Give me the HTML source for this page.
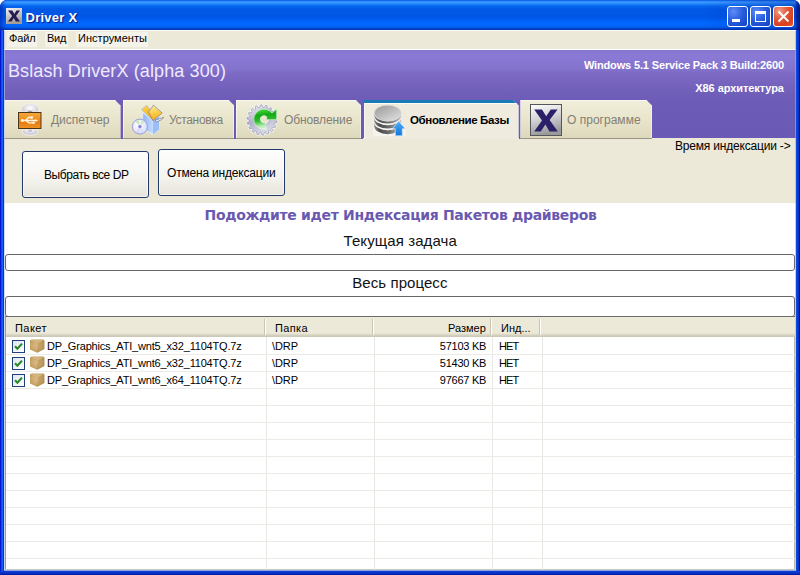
<!DOCTYPE html>
<html><head><meta charset="utf-8">
<style>
html,body{margin:0;padding:0;}
body{width:800px;height:575px;overflow:hidden;background:#fff;position:relative;font-family:"Liberation Sans",sans-serif;font-size:11px;color:#000;}
.abs{position:absolute;}
#win{position:absolute;left:0;top:0;width:800px;height:575px;border-radius:7px 7px 0 0;overflow:hidden;background:#0a3bd2;}
#title{position:absolute;left:0;top:0;width:800px;height:30px;background:linear-gradient(to bottom,#0050da 0px,#2a8bff 1.2px,#3b97ff 2.5px,#2085fb 4px,#0667ee 6px,#0059e5 9px,#0057e5 17px,#005ff4 20px,#0267fe 23px,#0365fa 26px,#0359e8 27.5px,#0046c8 28.6px,#002f9e 30px);}
#bl{position:absolute;left:0;top:30px;width:4px;height:545px;background:linear-gradient(to right,#0019cf 0,#0019cf 1px,#0f4bee 1px,#0f4bee 2px,#1a5cf4 2px,#1a5cf4 3px,#0634c4 3px,#0634c4 4px);}
#br{position:absolute;left:796px;top:30px;width:4px;height:545px;background:linear-gradient(to right,#1148de 0,#1148de 1px,#0a3cd8 1px,#0a3cd8 2px,#0632cc 2px,#0632cc 3px,#001a98 3px,#001a98 4px);}
#bb{position:absolute;left:0;top:571px;width:800px;height:4px;background:linear-gradient(to bottom,#0c3ad2 0,#0c3ad2 1px,#0a34cc 1px,#0a34cc 2px,#082cc0 2px,#082cc0 3px,#001fa6 3px,#001fa6 4px);}
#ttext{position:absolute;left:26px;top:9.5px;font-family:"Liberation Sans",sans-serif;font-weight:bold;font-size:13px;color:#fff;text-shadow:1px 1px 1px #0a1883;white-space:nowrap;}
.tb{position:absolute;top:6px;width:21px;height:21px;border-radius:3px;border:1px solid #fff;box-sizing:border-box;background:radial-gradient(circle at 30% 25%,#5e8cf5 0%,#2a5fe0 45%,#1240c0 100%);}
#menu{position:absolute;left:4px;top:30px;width:792px;height:19px;background:#ece9d8;}
#menuline{position:absolute;left:4px;top:49px;width:792px;height:1px;background:#fff;}
.mi{position:absolute;top:2px;height:15px;background:#f4f3ea;}
.mt{position:absolute;top:32.3px;font-size:11px;white-space:nowrap;}
#hdr{position:absolute;left:4px;top:50px;width:792px;height:88px;background:linear-gradient(to bottom,#8675d0 0%,#8a79d6 7%,#8473cc 22%,#7c6ac5 26%,#7361bb 42%,#6d5cb7 58%,#6b5ab5 100%);}
#panel{position:absolute;left:4px;top:138px;width:792px;height:65px;background:#ece9d8;}
#white{position:absolute;left:4px;top:203px;width:792px;height:367px;background:#fff;}
.tab{position:absolute;top:99.5px;height:39.2px;box-shadow:inset 1px 1px 0 rgba(255,255,255,.6),inset -1px 0 0 rgba(255,255,255,.45);background:linear-gradient(to bottom,#f1eedb 0%,#e9e5cc 50%,#ddd8bb 100%);}
.tabt{position:absolute;font-size:12px;color:#827f75;white-space:nowrap;top:113px;}
.btn{position:absolute;box-sizing:border-box;width:127px;height:47px;border:1px solid #21386b;border-radius:3px;background:linear-gradient(to bottom,#fefefd 0%,#f4f3ee 60%,#e6e4da 100%);box-shadow:inset 0 0 0 1px rgba(255,255,255,.6);}
.bt{position:absolute;font-size:12px;white-space:nowrap;}
.pb{position:absolute;left:5px;width:790px;box-sizing:border-box;border:1px solid #686868;border-radius:3px;background:#fff;}
.lt{position:absolute;font-size:11px;white-space:nowrap;line-height:14px;}
.ctr{position:absolute;left:4px;width:792px;text-align:center;white-space:nowrap;}
</style><style id="fit">
#ttext{letter-spacing:0.266px;left:25.5px;right:auto;text-align:left;width:auto}
#m1{letter-spacing:-0.099px;left:9.2px;right:auto;text-align:left;width:auto}
#m2{letter-spacing:-0.269px;left:47.0px;right:auto;text-align:left;width:auto}
#m3{letter-spacing:0.037px;left:77.5px;right:auto;text-align:left;width:auto}
#apptitle{letter-spacing:0.111px;left:7.5px;right:auto;text-align:left;width:auto}
#os1{letter-spacing:-0.144px;left:583.9px;right:auto;text-align:left;width:auto}
#os2{letter-spacing:-0.072px;left:695.3px;right:auto;text-align:left;width:auto}
#tt1{letter-spacing:-0.023px;left:50.5px;right:auto;text-align:left;width:auto}
#tt2{letter-spacing:-0.313px;left:168.8px;right:auto;text-align:left;width:auto}
#tt3{letter-spacing:-0.100px;left:283.2px;right:auto;text-align:left;width:auto}
#tt4{letter-spacing:-0.369px;left:409.2px;right:auto;text-align:left;width:auto}
#tt5{letter-spacing:0.016px;left:566.9px;right:auto;text-align:left;width:auto}
#b1{letter-spacing:-0.435px;left:43.8px;right:auto;text-align:left;width:auto}
#b2{letter-spacing:-0.190px;left:166.8px;right:auto;text-align:left;width:auto}
#tm{letter-spacing:-0.191px;left:674.8px;right:auto;text-align:left;width:auto}
#h1{letter-spacing:-0.324px;left:204.5px;right:auto;text-align:left;width:auto}
#h2{letter-spacing:0.099px;left:343.5px;right:auto;text-align:left;width:auto}
#h3{letter-spacing:0.066px;left:352.3px;right:auto;text-align:left;width:auto}
#lh1{letter-spacing:0.427px;left:9.9px;right:auto;text-align:left;width:auto}
#lh2{letter-spacing:0.349px;left:269.8px;right:auto;text-align:left;width:auto}
#lh3{letter-spacing:-0.002px;left:443.0px;right:auto;text-align:left;width:auto}
#lh4{letter-spacing:0.020px;left:496.1px;right:auto;text-align:left;width:auto}
#r0n{letter-spacing:-0.181px;left:42.0px;right:auto;text-align:left;width:auto}
#r0f{letter-spacing:-0.095px;left:266.5px;right:auto;text-align:left;width:auto}
#r0s{letter-spacing:-0.254px;left:434.8px;right:auto;text-align:left;width:auto}
#r0i{letter-spacing:-0.933px;left:493.3px;right:auto;text-align:left;width:auto}
#r1n{letter-spacing:-0.181px;left:42.0px;right:auto;text-align:left;width:auto}
#r1f{letter-spacing:-0.095px;left:266.5px;right:auto;text-align:left;width:auto}
#r1s{letter-spacing:-0.254px;left:434.8px;right:auto;text-align:left;width:auto}
#r1i{letter-spacing:-0.933px;left:493.3px;right:auto;text-align:left;width:auto}
#r2n{letter-spacing:-0.181px;left:42.0px;right:auto;text-align:left;width:auto}
#r2f{letter-spacing:-0.095px;left:266.5px;right:auto;text-align:left;width:auto}
#r2s{letter-spacing:-0.254px;left:434.8px;right:auto;text-align:left;width:auto}
#r2i{letter-spacing:-0.933px;left:493.3px;right:auto;text-align:left;width:auto}
</style></head><body>
<div id="win">
<div id="title"></div>
<div class="abs" style="left:0;top:0;width:800px;height:30px;background:linear-gradient(to right,rgba(0,20,160,.55) 0,rgba(0,20,160,.25) 3px,rgba(0,20,160,0) 7px,rgba(0,20,160,0) 700px,rgba(0,25,150,.22) 770px,rgba(0,25,150,.3) 795px,rgba(0,10,120,.7) 797px,rgba(0,10,110,.8) 800px)"></div>
<div id="bl"></div><div id="br"></div>
<div id="menu">
 <div class="mi" style="left:3px;width:30px"></div>
 <div class="mi" style="left:41px;width:23px"></div>
 <div class="mi" style="left:72px;width:72px"></div>
</div>
<div id="menuline"></div>
<div class="mt" id="m1" style="left:9px">Файл</div>
<div class="mt" id="m2" style="left:47px">Вид</div>
<div class="mt" id="m3" style="left:78px">Инструменты</div>
<div id="hdr"></div>
<div id="apptitle" class="abs" style="left:8px;top:61.4px;font-size:18px;color:#eeeaff;white-space:nowrap;">Bslash DriverX (alpha 300)</div>
<div id="os1" class="abs" style="right:17px;top:58.5px;font-size:11px;font-weight:bold;color:#fff;white-space:nowrap;">Windows 5.1 Service Pack 3 Build:2600</div>
<div id="os2" class="abs" style="right:16px;top:82px;font-size:11px;font-weight:bold;color:#fff;white-space:nowrap;">X86 архитектура</div>
<div id="panel"></div>
<!-- tabs -->
<div class="tab" id="tab1" style="left:4px;width:116.5px;clip-path:polygon(0 0,110.5px 0,100% 6px,100% 100%,0 100%)"></div>
<div class="tab" id="tab2" style="left:122.5px;width:111.7px;clip-path:polygon(0 0,105.7px 0,100% 6px,100% 100%,0 100%)"></div>
<div class="tab" id="tab3" style="left:236px;width:125.3px;clip-path:polygon(0 0,119.3px 0,100% 6px,100% 100%,0 100%)"></div>
<div class="tab" id="tab4" style="left:363.5px;width:155.1px;height:39.5px;background:#efecdf;clip-path:polygon(0 0,149.5px 0,100% 6px,100% 100%,0 100%)"><div style="position:absolute;left:0;top:0;width:100%;height:3.5px;background:#1a7cb6"></div><div style="position:absolute;left:0;top:3.5px;width:100%;height:1px;background:#fbfaf5"></div></div>
<div class="tab" id="tab5" style="left:520.4px;width:131.6px;clip-path:polygon(0 0,125.5px 0,100% 6px,100% 100%,0 100%)"></div>
<div class="abs" style="left:4px;top:137.700px;width:357.500px;height:1px;background:#9a978a"></div>
<div class="abs" style="left:520.400px;top:137.700px;width:131.600px;height:1px;background:#9a978a"></div>
<div class="tabt" id="tt1" style="left:51px">Диспетчер</div>
<div class="tabt" id="tt2" style="left:169px">Установка</div>
<div class="tabt" id="tt3" style="left:284px">Обновление</div>
<div class="tabt" id="tt4" style="left:410px;color:#000;font-weight:bold;font-size:11.5px;top:114px">Обновление Базы</div>
<div class="tabt" id="tt5" style="left:567px">О программе</div>
<div class="abs" style="left:120.500px;top:138px;width:2px;height:0.700px;background:#6b5ab5"></div><div class="abs" style="left:234.200px;top:138px;width:1.800px;height:0.700px;background:#6b5ab5"></div><div class="abs" style="left:361.300px;top:138px;width:2.200px;height:0.700px;background:#6b5ab5"></div><div class="abs" style="left:518.600px;top:138px;width:1.800px;height:0.700px;background:#6b5ab5"></div>
<!-- buttons -->
<div class="btn" style="left:22px;top:151px"></div>
<div class="btn" style="left:158px;top:149px"></div>
<div class="bt" id="b1" style="left:44px;top:168px">Выбрать все DP</div>
<div class="bt" id="b2" style="left:167px;top:166px">Отмена индексации</div>
<div class="bt" id="tm" style="left:675px;top:138.7px">Время индексации -&gt;</div>
<div id="white"></div>
<div class="ctr" id="h1" style="top:207.2px;font-family:'DejaVu Sans','Liberation Sans',sans-serif;font-size:14px;font-weight:bold;color:#6a59b0">Подождите идет Индексация Пакетов драйверов</div>
<div class="ctr" id="h2" style="top:231.5px;font-size:15px;color:#111">Текущая задача</div>
<div class="pb" style="top:254px;height:17px"></div>
<div class="ctr" id="h3" style="top:273.6px;font-size:15px;color:#111">Весь процесс</div>
<div class="pb" style="top:296px;height:21px"></div>
<!-- list -->
<div id="list" class="abs" style="left:5px;top:316px;width:790px;height:254px;background:#fff;overflow:hidden">
<div class="abs" style="left:0;top:0;width:790px;height:1px;background:#6b6b68"></div>
<div class="abs" style="left:0;top:1px;width:1px;height:253px;background:#9c9c96"></div><div class="abs" style="left:789px;top:1px;width:1px;height:253px;background:#b9b9ae"></div><div class="abs" style="left:0;top:253px;width:790px;height:1px;background:#c9c9c1"></div>
<div id="lh" class="abs" style="left:1px;top:1px;width:789px;height:20px;background:linear-gradient(to bottom,#eeebdd 0px,#ece9d8 3px,#ece9d8 16px,#e3dfcd 17px,#d9d5c3 18px,#cdc9b9 19px,#cdc9b9 20px)"></div>
<div class="abs" style="left:259px;top:3px;width:1px;height:16px;background:#c8c5b4"></div><div class="abs" style="left:260px;top:3px;width:1px;height:16px;background:#fff"></div>
<div class="abs" style="left:367px;top:3px;width:1px;height:16px;background:#c8c5b4"></div><div class="abs" style="left:368px;top:3px;width:1px;height:16px;background:#fff"></div>
<div class="abs" style="left:485px;top:3px;width:1px;height:16px;background:#c8c5b4"></div><div class="abs" style="left:486px;top:3px;width:1px;height:16px;background:#fff"></div>
<div class="abs" style="left:534px;top:3px;width:1px;height:16px;background:#c8c5b4"></div><div class="abs" style="left:535px;top:3px;width:1px;height:16px;background:#fff"></div>
<div class="abs" style="left:261px;top:21px;width:1px;height:233px;background:#e8e7e1"></div>
<div class="abs" style="left:369px;top:21px;width:1px;height:233px;background:#e8e7e1"></div>
<div class="abs" style="left:487px;top:21px;width:1px;height:233px;background:#e8e7e1"></div>
<div class="abs" style="left:537px;top:21px;width:1px;height:233px;background:#e8e7e1"></div>
<div class="abs" style="left:1px;top:38px;width:789px;height:1px;background:#ecebe6"></div>
<div class="abs" style="left:1px;top:55px;width:789px;height:1px;background:#ecebe6"></div>
<div class="abs" style="left:1px;top:72px;width:789px;height:1px;background:#ecebe6"></div>
<div class="abs" style="left:1px;top:89px;width:789px;height:1px;background:#ecebe6"></div>
<div class="abs" style="left:1px;top:106px;width:789px;height:1px;background:#ecebe6"></div>
<div class="abs" style="left:1px;top:123px;width:789px;height:1px;background:#ecebe6"></div>
<div class="abs" style="left:1px;top:140px;width:789px;height:1px;background:#ecebe6"></div>
<div class="abs" style="left:1px;top:157px;width:789px;height:1px;background:#ecebe6"></div>
<div class="abs" style="left:1px;top:174px;width:789px;height:1px;background:#ecebe6"></div>
<div class="abs" style="left:1px;top:191px;width:789px;height:1px;background:#ecebe6"></div>
<div class="abs" style="left:1px;top:208px;width:789px;height:1px;background:#ecebe6"></div>
<div class="abs" style="left:1px;top:225px;width:789px;height:1px;background:#ecebe6"></div>
<div class="abs" style="left:1px;top:242px;width:789px;height:1px;background:#ecebe6"></div>
<div class="lt" id="lh1" style="left:10px;top:5px">Пакет</div>
<div class="lt" id="lh2" style="left:270px;top:5px">Папка</div>
<div class="lt" id="lh3" style="right:310px;top:5px">Размер</div>
<div class="lt" id="lh4" style="left:496px;top:5px">Инд...</div>
<svg class="abs" style="left:7px;top:24px" width="13" height="13" viewBox="0 0 13 13"><defs><linearGradient id="cg0" x1="0" y1="0" x2="1" y2="1"><stop offset="0" stop-color="#dfe6ee"/><stop offset="1" stop-color="#ffffff"/></linearGradient></defs><rect x="0.5" y="0.5" width="12" height="12" fill="url(#cg0)" stroke="#213f7c"/><path d="M3 6.2 L5.4 8.8 L10 3.6" fill="none" stroke="#258a25" stroke-width="2.1"/></svg>
<svg class="abs" style="left:24px;top:23px" width="16" height="15" viewBox="0 0 16 15"><defs><radialGradient id="bx23" cx="0.45" cy="0.45" r="0.65"><stop offset="0" stop-color="#dbba84"/><stop offset="0.6" stop-color="#c9a66a"/><stop offset="1" stop-color="#a98a4c"/></radialGradient></defs><path d="M1 1.600 L2.600 0.400 L14.400 0.400 L15.400 1.400 L15.400 10 L8.200 13.700 L1 10.500Z" fill="url(#bx23)"/><path d="M9 4 L15.400 1.400 L15.400 10 L8.200 13.700Z" fill="#a88848" opacity="0.350"/><path d="M1 1.600 L2.600 0.400 L14.400 0.400 L15.400 1.400 L9 4Z" fill="#e2c898" opacity="0.400"/></svg>
<div class="lt" id="r0n" style="left:42px;top:23px">DP_Graphics_ATI_wnt5_x32_1104TQ.7z</div>
<div class="lt" id="r0f" style="left:267px;top:23px">\DRP</div>
<div class="lt" id="r0s" style="right:309px;top:23px">57103 KB</div>
<div class="lt" id="r0i" style="left:494px;top:23px">НЕТ</div>
<svg class="abs" style="left:7px;top:41px" width="13" height="13" viewBox="0 0 13 13"><defs><linearGradient id="cg1" x1="0" y1="0" x2="1" y2="1"><stop offset="0" stop-color="#dfe6ee"/><stop offset="1" stop-color="#ffffff"/></linearGradient></defs><rect x="0.5" y="0.5" width="12" height="12" fill="url(#cg1)" stroke="#213f7c"/><path d="M3 6.2 L5.4 8.8 L10 3.6" fill="none" stroke="#258a25" stroke-width="2.1"/></svg>
<svg class="abs" style="left:24px;top:40px" width="16" height="15" viewBox="0 0 16 15"><defs><radialGradient id="bx40" cx="0.45" cy="0.45" r="0.65"><stop offset="0" stop-color="#dbba84"/><stop offset="0.6" stop-color="#c9a66a"/><stop offset="1" stop-color="#a98a4c"/></radialGradient></defs><path d="M1 1.600 L2.600 0.400 L14.400 0.400 L15.400 1.400 L15.400 10 L8.200 13.700 L1 10.500Z" fill="url(#bx40)"/><path d="M9 4 L15.400 1.400 L15.400 10 L8.200 13.700Z" fill="#a88848" opacity="0.350"/><path d="M1 1.600 L2.600 0.400 L14.400 0.400 L15.400 1.400 L9 4Z" fill="#e2c898" opacity="0.400"/></svg>
<div class="lt" id="r1n" style="left:42px;top:40px">DP_Graphics_ATI_wnt6_x32_1104TQ.7z</div>
<div class="lt" id="r1f" style="left:267px;top:40px">\DRP</div>
<div class="lt" id="r1s" style="right:309px;top:40px">51430 KB</div>
<div class="lt" id="r1i" style="left:494px;top:40px">НЕТ</div>
<svg class="abs" style="left:7px;top:58px" width="13" height="13" viewBox="0 0 13 13"><defs><linearGradient id="cg2" x1="0" y1="0" x2="1" y2="1"><stop offset="0" stop-color="#dfe6ee"/><stop offset="1" stop-color="#ffffff"/></linearGradient></defs><rect x="0.5" y="0.5" width="12" height="12" fill="url(#cg2)" stroke="#213f7c"/><path d="M3 6.2 L5.4 8.8 L10 3.6" fill="none" stroke="#258a25" stroke-width="2.1"/></svg>
<svg class="abs" style="left:24px;top:57px" width="16" height="15" viewBox="0 0 16 15"><defs><radialGradient id="bx57" cx="0.45" cy="0.45" r="0.65"><stop offset="0" stop-color="#dbba84"/><stop offset="0.6" stop-color="#c9a66a"/><stop offset="1" stop-color="#a98a4c"/></radialGradient></defs><path d="M1 1.600 L2.600 0.400 L14.400 0.400 L15.400 1.400 L15.400 10 L8.200 13.700 L1 10.500Z" fill="url(#bx57)"/><path d="M9 4 L15.400 1.400 L15.400 10 L8.200 13.700Z" fill="#a88848" opacity="0.350"/><path d="M1 1.600 L2.600 0.400 L14.400 0.400 L15.400 1.400 L9 4Z" fill="#e2c898" opacity="0.400"/></svg>
<div class="lt" id="r2n" style="left:42px;top:57px">DP_Graphics_ATI_wnt6_x64_1104TQ.7z</div>
<div class="lt" id="r2f" style="left:267px;top:57px">\DRP</div>
<div class="lt" id="r2s" style="right:309px;top:57px">97667 KB</div>
<div class="lt" id="r2i" style="left:494px;top:57px">НЕТ</div>
</div>
<!--ICONS--><!-- title icon -->
<svg class="abs" style="left:6px;top:8px" width="16" height="16" viewBox="0 0 16 16"><defs><linearGradient id="ti" x1="0" y1="0" x2="0.3" y2="1"><stop offset="0" stop-color="#f4f2f6"/><stop offset="1" stop-color="#a59c98"/></linearGradient></defs><rect width="16" height="16" fill="url(#ti)"/><path d="M2 2.5H6.3L8.3 6L10.5 2.5H14L10 8L14 13.5H9.8L7.8 10L5.6 13.5H2L6.2 8Z" fill="#241a52"/></svg>
<!-- tab1 icon: usb device -->
<svg class="abs" style="left:14px;top:101px" width="32" height="36" viewBox="14 101 32 36"><defs>
<linearGradient id="i1a" x1="0" y1="0" x2="0" y2="1"><stop offset="0" stop-color="#f6a93c"/><stop offset="0.5" stop-color="#ee8a1e"/><stop offset="0.55" stop-color="#e67a0c"/><stop offset="1" stop-color="#f09424"/></linearGradient>
<radialGradient id="i1b" cx="0.5" cy="0.35" r="0.7"><stop offset="0" stop-color="#ffffff"/><stop offset="1" stop-color="#b9b6c4"/></radialGradient></defs>
<ellipse cx="30" cy="110" rx="9" ry="6.5" fill="url(#i1b)" stroke="#f4f2ee" stroke-width="1"/>
<ellipse cx="30" cy="112" rx="2.6" ry="1.3" fill="#55525e"/>
<ellipse cx="30" cy="131.5" rx="8" ry="3.8" fill="url(#i1b)" stroke="#f4f2ee" stroke-width="1"/>
<rect x="28" y="127" width="4" height="5" fill="#c8c6d0"/>
<rect x="17.5" y="111.5" width="24.500" height="18" fill="#f3efe6"/>
<rect x="18.500" y="112.500" width="22.500" height="16" fill="url(#i1a)" stroke="#4a3418" stroke-width="1"/>
<path d="M22 120.500 H25.500 L28.500 117.500 H31 M25.500 120.500 L29 122.800 H33 M25.500 120.500 H36" fill="none" stroke="#fff6e0" stroke-width="1.300"/>
<circle cx="22.300" cy="120.500" r="1.500" fill="#fff6e0"/><rect x="30.500" y="116.300" width="2.400" height="2.400" fill="#fff6e0"/><circle cx="33.600" cy="122.800" r="1.300" fill="#fff6e0"/><path d="M35.500 119 L38 120.500 L35.500 122Z" fill="#fff6e0"/>
</svg>
<!-- tab2 icon: box + cd -->
<svg class="abs" style="left:128px;top:101px" width="38" height="36" viewBox="128 101 38 36"><defs>
<linearGradient id="i2a" x1="0" y1="0" x2="1" y2="0"><stop offset="0" stop-color="#8db5f4"/><stop offset="0.6" stop-color="#c3dbfd"/><stop offset="1" stop-color="#a9c9f8"/></linearGradient>
<linearGradient id="i2b" x1="0.2" y1="0" x2="0.6" y2="1"><stop offset="0" stop-color="#fbd04a"/><stop offset="0.5" stop-color="#f8c030"/><stop offset="1" stop-color="#f0a21a"/></linearGradient>
<linearGradient id="i2d" x1="0.3" y1="0" x2="0.5" y2="1"><stop offset="0" stop-color="#fdeaa4"/><stop offset="0.6" stop-color="#f9c63c"/><stop offset="1" stop-color="#f2a61c"/></linearGradient>
<radialGradient id="i2c" cx="0.4" cy="0.4" r="0.7"><stop offset="0" stop-color="#ffffff"/><stop offset="1" stop-color="#d4d9fb"/></radialGradient></defs>
<path d="M142.700 112.500 L142.700 128.500 L153 134.400 L159.100 129.500 L159.100 116.500 L153 120.500Z" fill="url(#i2a)" stroke="#e4eefc" stroke-width="0.900"/>
<path d="M153 120.500 L159.100 116.500 L159.100 129.500 L153 134.400Z" fill="#9bbef4"/>
<path d="M141.400 109.500 L146.800 105.200 L152 112.500 L153 120.500Z" fill="url(#i2b)" stroke="#aebfe6" stroke-width="0.700"/>
<path d="M153.500 105.200 L162.200 113 L153 120.700 L148.500 112 Z" fill="url(#i2d)" stroke="#6a7390" stroke-width="0.600"/>
<path d="M155 120.300 L163.600 117.400 L161.800 119.600 L156.600 121.800Z" fill="#fafafc" stroke="#3a3a44" stroke-width="0.450"/>
<circle cx="139.900" cy="126.600" r="7.500" fill="url(#i2c)" stroke="#8b95d6" stroke-width="0.900"/>
<path d="M139.900 126.600 L135.600 121.600 A6.600 6.600 0 0 1 138.700 120.200Z" fill="#bfe3b2" opacity="0.850"/><path d="M139.900 126.600 L144.400 122.100 A6.600 6.600 0 0 0 141.700 120.300Z" fill="#c4e6ba" opacity="0.850"/><path d="M139.900 126.600 L136.200 131.900 A6.600 6.600 0 0 0 139.200 133.100Z" fill="#dbcdf5" opacity="0.850"/><path d="M139.900 126.600 L144 131.500 A6.600 6.600 0 0 1 141.200 132.900Z" fill="#d3daf8" opacity="0.850"/>
<circle cx="139.900" cy="126.600" r="1.700" fill="#8b7ce2"/>
</svg>
<!-- tab3 icon: gear + green arrow -->
<svg class="abs" style="left:244px;top:102px" width="36" height="36" viewBox="244 102 36 36"><defs>
<linearGradient id="i3a" x1="0" y1="0" x2="0.4" y2="1"><stop offset="0" stop-color="#f6f6fa"/><stop offset="0.55" stop-color="#b2b2c8"/><stop offset="1" stop-color="#dcdce8"/></linearGradient>
<linearGradient id="i3b" x1="0.4" y1="0" x2="0.55" y2="1"><stop offset="0" stop-color="#4ae040"/><stop offset="0.3" stop-color="#16a816"/><stop offset="0.55" stop-color="#2cbc2c"/><stop offset="0.8" stop-color="#b4eab0"/><stop offset="1" stop-color="#eef8ee"/></linearGradient></defs>
<path d="M274.70 120.00 L277.16 121.06 L276.97 122.64 L274.32 123.07 L273.93 124.34 L275.89 126.18 L275.16 127.60 L272.53 127.10 L271.73 128.16 L272.93 130.56 L271.77 131.64 L269.46 130.27 L268.35 131.00 L268.66 133.66 L267.20 134.28 L265.50 132.21 L264.21 132.51 L263.59 135.12 L262.00 135.20 L261.11 132.67 L259.79 132.51 L258.32 134.75 L256.80 134.28 L256.83 131.60 L255.65 131.00 L253.50 132.60 L252.23 131.64 L253.18 129.14 L252.27 128.16 L249.70 128.93 L248.84 127.60 L250.59 125.57 L250.07 124.34 L247.39 124.19 L247.03 122.64 L249.37 121.33 L249.30 120.00 L246.84 118.94 L247.03 117.36 L249.68 116.93 L250.07 115.66 L248.11 113.82 L248.84 112.40 L251.47 112.90 L252.27 111.84 L251.07 109.44 L252.23 108.36 L254.54 109.73 L255.65 109.00 L255.34 106.34 L256.80 105.72 L258.50 107.79 L259.79 107.49 L260.41 104.88 L262.00 104.80 L262.89 107.33 L264.21 107.49 L265.68 105.25 L267.20 105.72 L267.17 108.40 L268.35 109.00 L270.50 107.40 L271.77 108.36 L270.82 110.86 L271.73 111.84 L274.30 111.07 L275.16 112.40 L273.41 114.43 L273.93 115.66 L276.61 115.81 L276.97 117.36 L274.63 118.67Z M269.40 119.30 A5.4 5.4 0 1 0 258.60 119.30 A5.4 5.4 0 1 0 269.40 119.30Z" fill="url(#i3a)" fill-rule="evenodd" stroke="#f7f6f2" stroke-width="2.2" stroke-linejoin="round"/>
<path d="M274.70 120.00 L277.16 121.06 L276.97 122.64 L274.32 123.07 L273.93 124.34 L275.89 126.18 L275.16 127.60 L272.53 127.10 L271.73 128.16 L272.93 130.56 L271.77 131.64 L269.46 130.27 L268.35 131.00 L268.66 133.66 L267.20 134.28 L265.50 132.21 L264.21 132.51 L263.59 135.12 L262.00 135.20 L261.11 132.67 L259.79 132.51 L258.32 134.75 L256.80 134.28 L256.83 131.60 L255.65 131.00 L253.50 132.60 L252.23 131.64 L253.18 129.14 L252.27 128.16 L249.70 128.93 L248.84 127.60 L250.59 125.57 L250.07 124.34 L247.39 124.19 L247.03 122.64 L249.37 121.33 L249.30 120.00 L246.84 118.94 L247.03 117.36 L249.68 116.93 L250.07 115.66 L248.11 113.82 L248.84 112.40 L251.47 112.90 L252.27 111.84 L251.07 109.44 L252.23 108.36 L254.54 109.73 L255.65 109.00 L255.34 106.34 L256.80 105.72 L258.50 107.79 L259.79 107.49 L260.41 104.88 L262.00 104.80 L262.89 107.33 L264.21 107.49 L265.68 105.25 L267.20 105.72 L267.17 108.40 L268.35 109.00 L270.50 107.40 L271.77 108.36 L270.82 110.86 L271.73 111.84 L274.30 111.07 L275.16 112.40 L273.41 114.43 L273.93 115.66 L276.61 115.81 L276.97 117.36 L274.63 118.67Z M269.40 119.30 A5.4 5.4 0 1 0 258.60 119.30 A5.4 5.4 0 1 0 269.40 119.30Z" fill="url(#i3a)" fill-rule="evenodd" stroke="#9a9ab8" stroke-width="0.7"/>
<path d="M272.04 113.02 A10.2 10.2 0 1 0 266.64 129.15 L264.96 122.87 A3.7 3.7 0 1 1 266.92 117.02 L266.3 119.7 L276.7 119.7 L276.7 108.7Z" fill="url(#i3b)" stroke="#e2f6e0" stroke-width="0.6"/>
</svg>
<!-- tab4 icon: db + blue arrow -->
<svg class="abs" style="left:370px;top:103px" width="38" height="35" viewBox="370 103 38 35"><defs>
<linearGradient id="i4a" x1="0.1" y1="0" x2="0.9" y2="1"><stop offset="0" stop-color="#9c9c9c"/><stop offset="0.5" stop-color="#bdbdbd"/><stop offset="1" stop-color="#e2e2e2"/></linearGradient>
<linearGradient id="i4b" x1="0" y1="0" x2="1" y2="0"><stop offset="0" stop-color="#8e8e8e"/><stop offset="0.2" stop-color="#4c4c4c"/><stop offset="0.55" stop-color="#6c6c6c"/><stop offset="1" stop-color="#bdbdbd"/></linearGradient>
<linearGradient id="i4c" x1="0" y1="0" x2="0" y2="1"><stop offset="0" stop-color="#4eacf8"/><stop offset="1" stop-color="#1276da"/></linearGradient></defs>
<rect x="373" y="127" width="33" height="9" fill="#fbfaf6" opacity="0.550"/>
<path d="M374.3 126.2 A13.4 8.0 0 0 0 401.1 126.2 L401.1 127.6 A13.4 8.0 0 0 1 374.3 127.6Z" fill="#f7f7f5"/>
<path d="M374.3 122.2 A13.4 8.0 0 0 0 401.1 122.2 L401.1 126.2 A13.4 8.0 0 0 1 374.3 126.2Z" fill="url(#i4b)"/>
<path d="M374.3 120.6 A13.4 8.0 0 0 0 401.1 120.6 L401.1 122.2 A13.4 8.0 0 0 1 374.3 122.2Z" fill="#f5f5f5"/>
<path d="M374.3 117.2 A13.4 8.0 0 0 0 401.1 117.2 L401.1 120.6 A13.4 8.0 0 0 1 374.3 120.6Z" fill="url(#i4b)"/>
<path d="M374.3 115.6 A13.4 8.0 0 0 0 401.1 115.6 L401.1 117.2 A13.4 8.0 0 0 1 374.3 117.2Z" fill="#f3f3f3"/>
<path d="M374.3 113.2 A13.4 8.0 0 0 0 401.1 113.2 L401.1 115.6 A13.4 8.0 0 0 1 374.3 115.6Z" fill="url(#i4b)"/>
<ellipse cx="387.7" cy="113.200" rx="13.4" ry="8.0" fill="url(#i4a)" stroke="#d6d6d6" stroke-width="0.800"/>
<path d="M398.700 121.200 L405.300 128.700 H402.300 V135.800 H395.300 V128.700 H392.600Z" fill="url(#i4c)" stroke="#cfe7fc" stroke-width="0.700"/>
</svg>
<!-- tab5 icon: X -->
<svg class="abs" style="left:530px;top:104px" width="32" height="32" viewBox="0 0 32 32"><defs><linearGradient id="i5" x1="0" y1="0" x2="0.250" y2="1"><stop offset="0" stop-color="#ffffff"/><stop offset="0.5" stop-color="#d4d4d6"/><stop offset="1" stop-color="#9a9a9c"/></linearGradient></defs><rect x="0.500" y="0.500" width="31" height="31" fill="url(#i5)" stroke="#55555a"/><path d="M4.200 5.500 H12 L16.200 12.300 L20.800 5.500 H27.600 L19.600 16 L27.800 27.600 H19.500 L15.400 20.600 L10.800 27.600 H4.200 L12 16.600Z" fill="#2a2068"/></svg>
<!--/ICONS--><div class="abs" style="left:4px;top:30px;width:1px;height:540px;background:rgba(176,192,238,.6)"></div>
<div class="abs" style="left:795px;top:30px;width:1px;height:540px;background:rgba(150,170,230,.6)"></div>
<div class="abs" style="left:4px;top:30px;width:792px;height:1px;background:rgba(255,255,255,.9)"></div>
<div class="abs" style="left:4px;top:570px;width:792px;height:1px;background:#8fa6e6"></div><div id="bb"></div>
<div id="ttext">Driver X</div>
<div class="tb" style="left:727px"><div class="abs" style="left:4px;top:12px;width:8px;height:3px;background:#fff"></div></div>
<div class="tb" style="left:750px"><div class="abs" style="left:4px;top:4px;width:11px;height:11px;box-sizing:border-box;border:1px solid #fff;border-top-width:3px"></div></div>
<div class="tb" style="left:773px;background:radial-gradient(circle at 28% 22%,#eea088 0%,#e2583a 40%,#d8401e 70%,#e8562a 100%)"><svg class="abs" style="left:0;top:0" width="19" height="19" viewBox="0 0 19 19"><path d="M4.500 4.500 L14.500 14.500 M14.500 4.500 L4.500 14.500" stroke="#fff" stroke-width="1.900" fill="none"/></svg></div>
</div>
</body></html>
